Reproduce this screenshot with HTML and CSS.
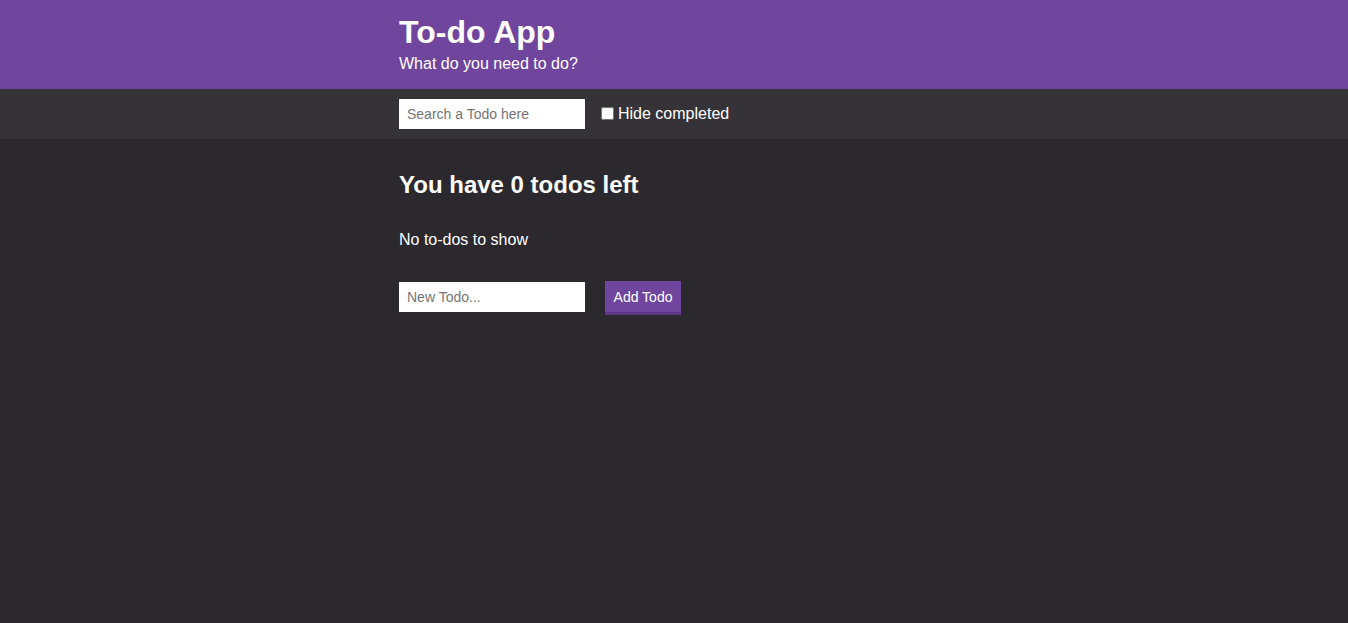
FILE: index.html
```html
<!DOCTYPE html>
<html lang="en">
<head>
<meta charset="utf-8">
<title>To-do App</title>
<link rel="stylesheet" href="styles.css">
</head>
<body>
  <header class="header">
    <div class="container">
      <h1 class="title">To-do App</h1>
      <p class="subtitle">What do you need to do?</p>
    </div>
  </header>
  <div class="toolbar">
    <div class="container toolbar-row">
      <input class="text-input" type="text" placeholder="Search a Todo here">
      <label class="check-label"><input class="check" type="checkbox">Hide completed</label>
    </div>
  </div>
  <main class="main">
    <div class="container">
      <h2 class="count">You have 0 todos left</h2>
      <p class="empty">No to-dos to show</p>
      <form class="add-row">
        <input class="text-input new-input" type="text" placeholder="New Todo...">
        <button class="add-btn" type="button">Add Todo</button>
      </form>
    </div>
  </main>
</body>
</html>
```
FILE: styles.css
```css
* { box-sizing: border-box; }
html, body { margin: 0; padding: 0; }
body {
  font-family: "Liberation Sans", Arial, sans-serif;
  background: #2b292e;
  color: #ffffff;
  min-height: 623px;
}
.container {
  width: 550px;
  margin: 0 auto;
}
.header {
  background: #6f459d;
  padding: 14px 0 16px;
}
.title {
  margin: 0;
  font-size: 32px;
  font-weight: bold;
  line-height: 36px;
}
.subtitle {
  margin: 5px 0 0;
  font-size: 16px;
  line-height: 18px;
}
.toolbar {
  background: #353238;
  padding: 10px 0;
}
.toolbar-row {
  display: flex;
  align-items: center;
}
.text-input {
  width: 186px;
  height: 30px;
  border: none;
  padding: 0 8px;
  font-family: "Liberation Sans", Arial, sans-serif;
  font-size: 14px;
  color: #333;
  background: #fff;
  outline: none;
}
.text-input::placeholder { color: #757575; }
.check-label {
  display: flex;
  align-items: center;
  margin-left: 16px;
  font-size: 16px;
}
.check {
  width: 13px;
  height: 13px;
  margin: 0 4px 1px 0;
}
.main {
  padding-top: 32px;
}
.count {
  margin: 0;
  font-size: 24px;
  line-height: 27px;
  font-weight: bold;
}
.empty {
  margin: 33px 0 0;
  font-size: 16px;
  line-height: 18px;
}
.add-row {
  display: flex;
  align-items: flex-start;
  gap: 20px;
  margin: 32px 0 0;
}
.new-input { margin-top: 1px; }
.add-btn {
  background: #6f459d;
  color: #fff;
  border: none;
  border-bottom: 3px solid #5b3785;
  padding: 8px 8px 6px;
  width: 76px;
  font-family: "Liberation Sans", Arial, sans-serif;
  font-size: 14px;
  line-height: 17px;
  height: 34px;
  cursor: pointer;
}
```
